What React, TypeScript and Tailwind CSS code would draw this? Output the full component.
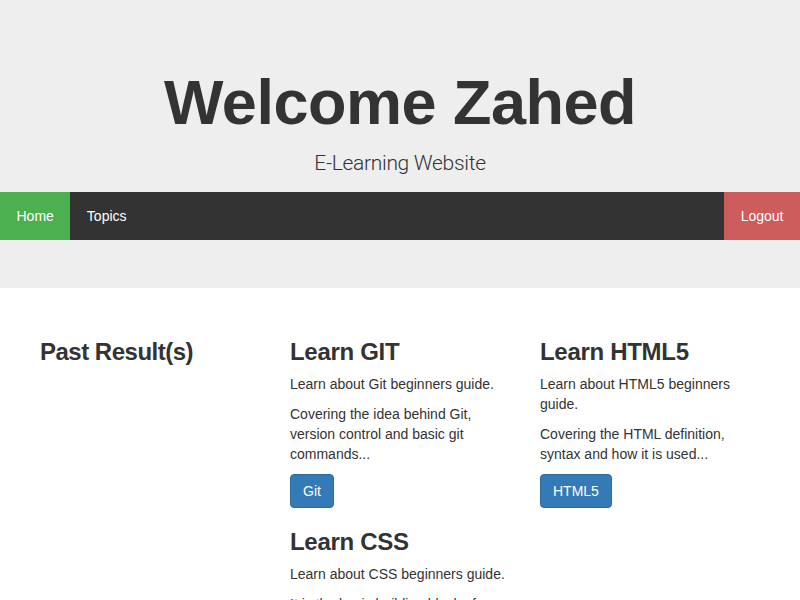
import React from "react";

const courses = [
  {
    title: "Learn GIT",
    intro: "Learn about Git beginners guide.",
    body: "Covering the idea behind Git, version control and basic git commands...",
    button: "Git",
  },
  {
    title: "Learn HTML5",
    intro: "Learn about HTML5 beginners guide.",
    body: "Covering the HTML definition, syntax and how it is used...",
    button: "HTML5",
  },
  {
    title: "Learn CSS",
    intro: "Learn about CSS beginners guide.",
    body: "It is the basic building block of styling web pages...",
    button: "CSS",
  },
];

function Course({ c }: { c: (typeof courses)[number] }) {
  return (
    <div>
      <h2 className="text-[24px] leading-[28px] font-bold tracking-[-0.3px] text-[#333]">{c.title}</h2>
      <p className="mt-2 text-[14px] leading-5 text-[#333]">{c.intro}</p>
      <p className="mt-2.5 text-[14px] leading-5 text-[#333]">{c.body}</p>
      <button className="mt-2.5 px-3 py-1.5 text-[14px] leading-5 text-white bg-[#337ab7] border border-[#2e6da4] rounded">
        {c.button}
      </button>
    </div>
  );
}

export default function App() {
  return (
    <div className="min-h-screen bg-white font-['Liberation_Sans',Arial,sans-serif] text-[#333]">
      <div className="bg-[#eeeeee] pt-[48px] pb-[48px]">
        <div className="text-center">
          <h1 className="mt-5 text-[63px] leading-[69px] font-bold text-[#333] tracking-[-0.5px]">
            Welcome Zahed
          </h1>
          <p className="mt-[12px] mb-[14px] text-[21px] leading-[29px] font-light font-['Roboto',sans-serif] tracking-[-0.3px] text-[#333]">
            E-Learning Website
          </p>
        </div>
        <nav className="flex bg-[#333333] h-12 text-[14px] leading-5 text-white">
          <a className="px-[16.5px] py-[14px] bg-[#4caf50]">Home</a>
          <a className="px-[16.5px] py-[14px]">Topics</a>
          <a className="ml-auto px-[16.5px] py-[14px] bg-[#cd5c5c]">Logout</a>
        </nav>
      </div>

      <div className="w-[750px] mx-auto pt-[50px] grid grid-cols-3">
        <div className="px-[15px]">
          <h2 className="text-[24px] leading-[28px] font-bold tracking-[-0.5px] text-[#333]">Past Result(s)</h2>
        </div>
        <div className="px-[15px] flex flex-col gap-[20px]">
          <Course c={courses[0]} />
          <Course c={courses[2]} />
        </div>
        <div className="px-[15px]">
          <Course c={courses[1]} />
        </div>
      </div>
    </div>
  );
}
